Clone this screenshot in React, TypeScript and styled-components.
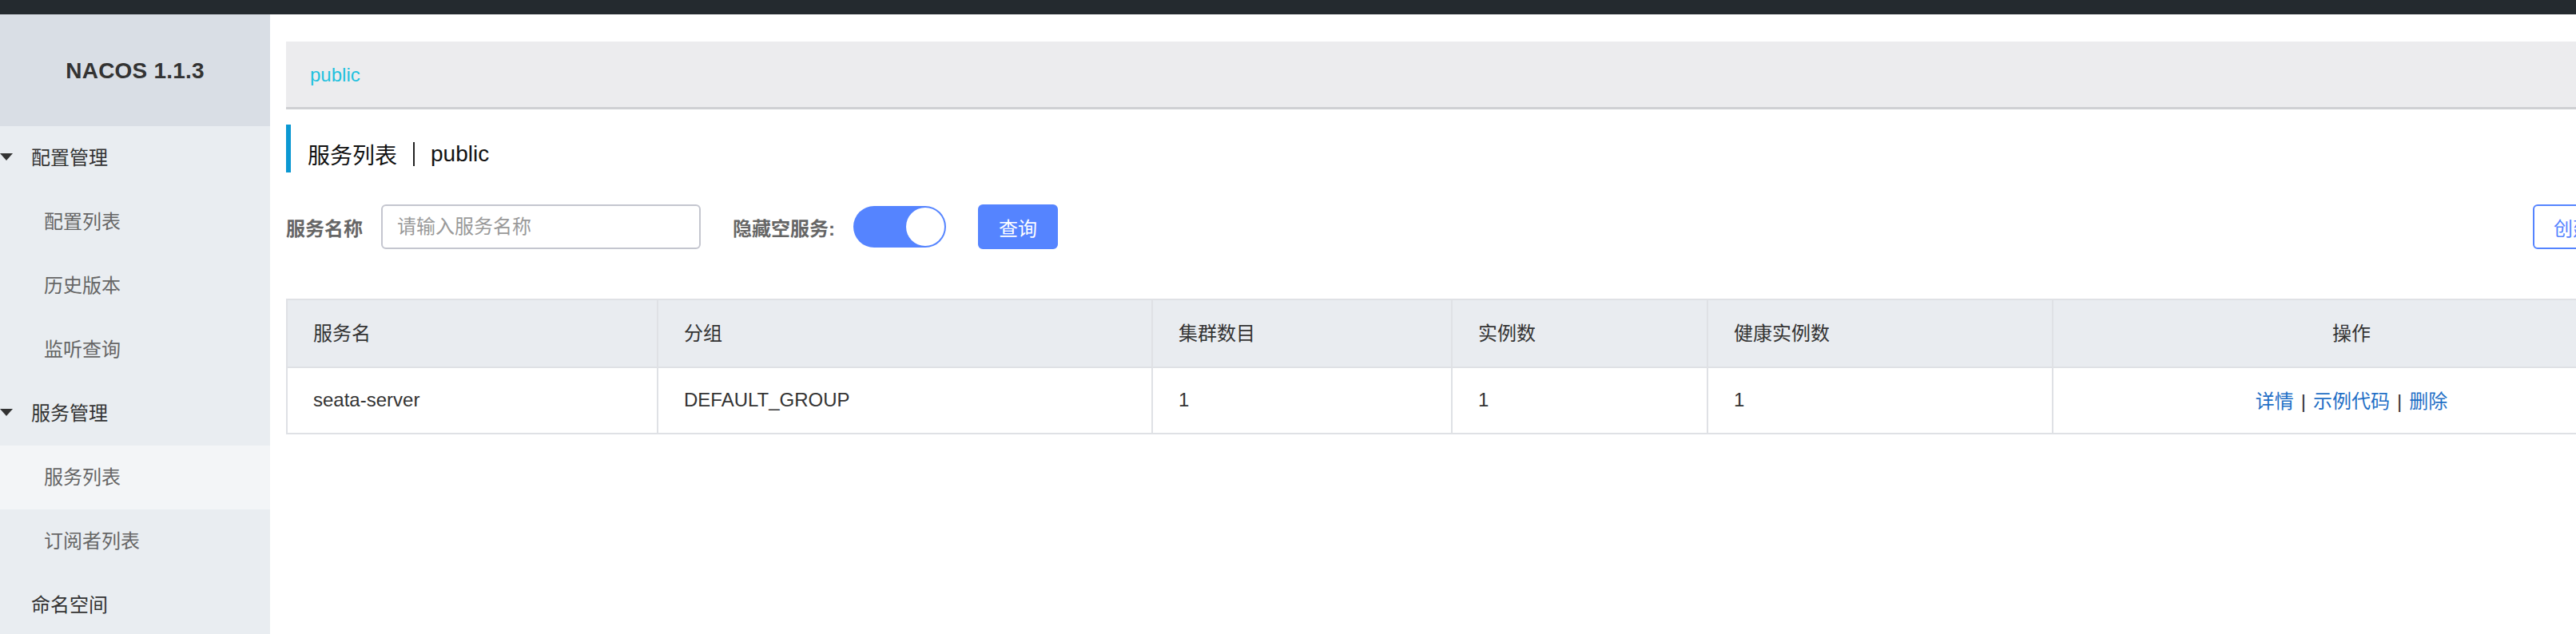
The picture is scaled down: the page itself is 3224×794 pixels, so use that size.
import React from "react";
import styled, { createGlobalStyle } from "styled-components";

const GlobalStyle = createGlobalStyle`
  html, body {
    margin: 0;
    padding: 0;
    overflow: hidden;
    background: #ffffff;
  }
  body {
    font-family: "Liberation Sans", "Noto Sans CJK SC", Arial, sans-serif;
    color: #333333;
  }
  * { box-sizing: border-box; }
`;

const Page = styled.div`
  width: 3336px;
  height: 794px;
  display: flex;
  flex-direction: column;
  overflow: hidden;
`;

const TopBar = styled.div`
  height: 18px;
  flex: none;
  background: #242a2f;
`;

const Body = styled.div`
  flex: 1;
  display: flex;
  min-height: 0;
`;

const Sidebar = styled.aside`
  width: 338px;
  flex: none;
  background: #e9edf1;
  display: flex;
  flex-direction: column;
`;

const Logo = styled.div`
  height: 140px;
  flex: none;
  background: #d9dee5;
  display: flex;
  align-items: center;
  justify-content: center;
  padding-top: 2px;
  font-size: 28px;
  font-weight: 700;
  color: #333333;
  letter-spacing: 0.2px;
`;

const MenuItem = styled.div<{ $level: number; $active?: boolean }>`
  height: 80px;
  flex: none;
  display: flex;
  align-items: center;
  padding-left: ${(p) => (p.$level === 0 ? 39 : 55)}px;
  padding-bottom: 6px;
  font-size: 24px;
  color: ${(p) => (p.$level === 0 ? "#333333" : "#666666")};
  background: ${(p) => (p.$active ? "#f3f5f7" : "transparent")};
`;

const MenuGroup = styled(MenuItem)`
  padding-left: 0;
  gap: 23px;
`;

const Caret = styled.span`
  width: 0;
  height: 0;
  border-left: 8px solid transparent;
  border-right: 8px solid transparent;
  border-top: 9px solid #333333;
  margin-top: 2px;
`;

const Main = styled.main`
  flex: 1;
  padding: 34px 20px 0 20px;
  display: flex;
  flex-direction: column;
`;

const Breadcrumb = styled.div`
  height: 85px;
  flex: none;
  background: #ececee;
  border-bottom: 3px solid #cfd0d3;
  display: flex;
  align-items: center;
  padding-left: 30px;
  padding-top: 2px;
  font-size: 24px;
  color: #1fc1de;
`;

const Title = styled.h2`
  margin: 19px 0 0 0;
  height: 60px;
  border-left: 6px solid #0b98d2;
  padding-left: 21px;
  padding-top: 14px;
  display: flex;
  align-items: center;
  font-size: 28px;
  font-weight: 400;
  color: #111111;
  gap: 16px;
`;

const Sep = styled.span`
  display: inline-block;
  width: 2px;
  height: 30px;
  background: #222222;
  margin: 0 4px;
`;

const FilterRow = styled.div`
  margin-top: 40px;
  height: 56px;
  flex: none;
  display: flex;
  align-items: center;
`;

const Label = styled.span<{ $gap: number }>`
  font-size: 24px;
  font-weight: 700;
  color: #666666;
  margin-right: ${(p) => p.$gap}px;
`;

const Input = styled.input`
  width: 400px;
  height: 56px;
  border: 2px solid #c4c6cf;
  border-radius: 6px;
  padding: 0 18px;
  font-size: 24px;
  font-family: inherit;
  color: #333333;
  outline: none;
  margin-right: 40px;
  &::placeholder {
    color: #999999;
  }
`;

const Switch = styled.div<{ $on: boolean }>`
  width: 116px;
  height: 52px;
  border-radius: 26px;
  background: ${(p) => (p.$on ? "#5584ff" : "#c4c6cf")};
  padding: 2px;
  display: flex;
  justify-content: ${(p) => (p.$on ? "flex-end" : "flex-start")};
  margin-right: 40px;
`;

const Knob = styled.div`
  width: 48px;
  height: 48px;
  border-radius: 50%;
  background: #ffffff;
`;

const Button = styled.button<{ $primary?: boolean }>`
  height: 56px;
  padding: 0 24px;
  border-radius: 6px;
  font-size: 24px;
  font-family: inherit;
  cursor: pointer;
  border: 2px solid #5584ff;
  background: ${(p) => (p.$primary ? "#5584ff" : "#ffffff")};
  color: ${(p) => (p.$primary ? "#ffffff" : "#5584ff")};
`;

const Spacer = styled.div`
  flex: 1;
`;

const Table = styled.table`
  margin-top: 62px;
  width: 2958px;
  table-layout: fixed;
  border-collapse: collapse;
  border: 2px solid #dfe1e5;
`;

const Th = styled.th<{ $center?: boolean }>`
  height: 85px;
  padding: 0 32px 4px 32px;
  background: #e9ecf0;
  border: 2px solid #dfe1e5;
  font-size: 24px;
  font-weight: 400;
  color: #333333;
  text-align: ${(p) => (p.$center ? "center" : "left")};
`;

const Td = styled.td<{ $center?: boolean }>`
  height: 83px;
  padding: 0 32px 2px 32px;
  border: 2px solid #dfe1e5;
  font-size: 24px;
  color: #333333;
  background: #ffffff;
  text-align: ${(p) => (p.$center ? "center" : "left")};
`;

const Link = styled.a`
  color: #1f6fc6;
  text-decoration: none;
  cursor: pointer;
`;

const LinkSep = styled.span`
  color: #333333;
  margin: 0 9px;
`;

const columns = [
  { title: "服务名", width: 464 },
  { title: "分组", width: 619 },
  { title: "集群数目", width: 375 },
  { title: "实例数", width: 320 },
  { title: "健康实例数", width: 432 },
  { title: "操作", width: 748, center: true },
];

const rows = [
  { name: "seata-server", group: "DEFAULT_GROUP", clusters: 1, instances: 1, healthy: 1 },
];

export default function App() {
  return (
    <>
      <GlobalStyle />
      <Page>
        <TopBar />
        <Body>
          <Sidebar>
            <Logo>NACOS 1.1.3</Logo>
            <MenuGroup $level={0}>
              <Caret />
              配置管理
            </MenuGroup>
            <MenuItem $level={1}>配置列表</MenuItem>
            <MenuItem $level={1}>历史版本</MenuItem>
            <MenuItem $level={1}>监听查询</MenuItem>
            <MenuGroup $level={0}>
              <Caret />
              服务管理
            </MenuGroup>
            <MenuItem $level={1} $active>
              服务列表
            </MenuItem>
            <MenuItem $level={1}>订阅者列表</MenuItem>
            <MenuItem $level={0}>命名空间</MenuItem>
          </Sidebar>
          <Main>
            <Breadcrumb>public</Breadcrumb>
            <Title>
              <span>服务列表</span>
              <Sep />
              <span>public</span>
            </Title>
            <FilterRow>
              <Label $gap={23}>服务名称</Label>
              <Input placeholder="请输入服务名称" />
              <Label $gap={23}>隐藏空服务:</Label>
              <Switch $on>
                <Knob />
              </Switch>
              <Button $primary>查询</Button>
              <Spacer />
              <Button>创建服务</Button>
            </FilterRow>
            <Table>
              <colgroup>
                {columns.map((c) => (
                  <col key={c.title} style={{ width: c.width }} />
                ))}
              </colgroup>
              <thead>
                <tr>
                  {columns.map((c) => (
                    <Th key={c.title} $center={c.center}>
                      {c.title}
                    </Th>
                  ))}
                </tr>
              </thead>
              <tbody>
                {rows.map((r) => (
                  <tr key={r.name}>
                    <Td>{r.name}</Td>
                    <Td>{r.group}</Td>
                    <Td>{r.clusters}</Td>
                    <Td>{r.instances}</Td>
                    <Td>{r.healthy}</Td>
                    <Td $center>
                      <Link>详情</Link>
                      <LinkSep>|</LinkSep>
                      <Link>示例代码</Link>
                      <LinkSep>|</LinkSep>
                      <Link>删除</Link>
                    </Td>
                  </tr>
                ))}
              </tbody>
            </Table>
          </Main>
        </Body>
      </Page>
    </>
  );
}
